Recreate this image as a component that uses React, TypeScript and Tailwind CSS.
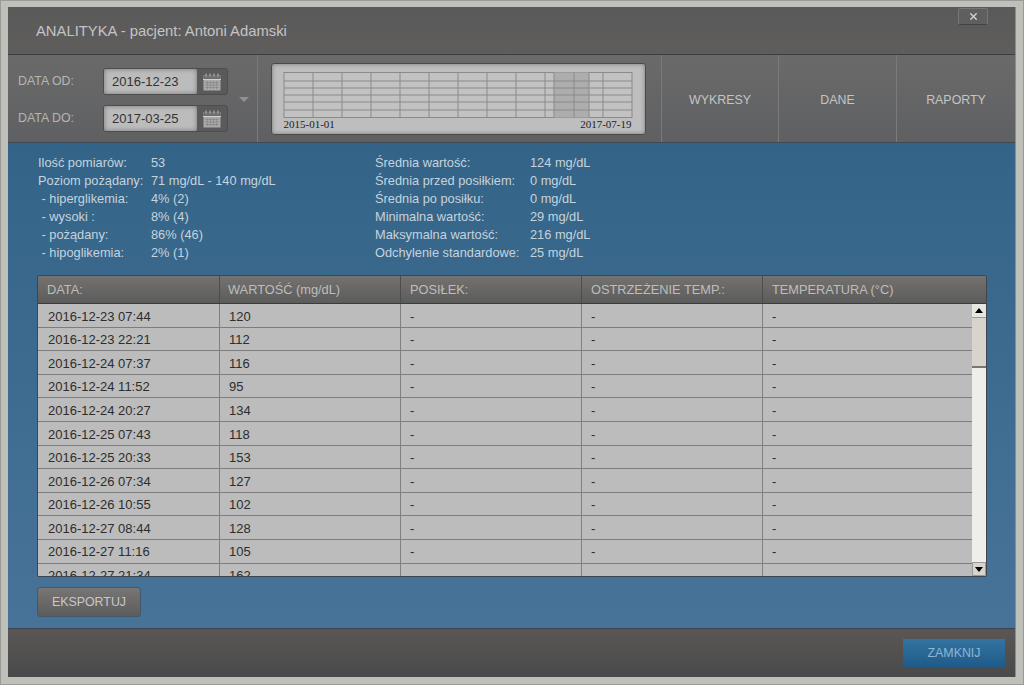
import { X } from 'lucide-react'

const font = { fontFamily: '"Liberation Sans", Arial, sans-serif' }

const rows = [
  ['2016-12-23 07:44', '120'],
  ['2016-12-23 22:21', '112'],
  ['2016-12-24 07:37', '116'],
  ['2016-12-24 11:52', '95'],
  ['2016-12-24 20:27', '134'],
  ['2016-12-25 07:43', '118'],
  ['2016-12-25 20:33', '153'],
  ['2016-12-26 07:34', '127'],
  ['2016-12-26 10:55', '102'],
  ['2016-12-27 08:44', '128'],
  ['2016-12-27 11:16', '105'],
  ['2016-12-27 21:34', '162'],
]

const statsLeft = [
  ['Ilość pomiarów:', '53'],
  ['Poziom pożądany:', '71 mg/dL - 140 mg/dL'],
  ['\u00a0- hiperglikemia:', '4% (2)'],
  ['\u00a0- wysoki :', '8% (4)'],
  ['\u00a0- pożądany:', '86% (46)'],
  ['\u00a0- hipoglikemia:', '2% (1)'],
]

const statsRight = [
  ['Średnia wartość:', '124 mg/dL'],
  ['Średnia przed posiłkiem:', '0 mg/dL'],
  ['Średnia po posiłku:', '0 mg/dL'],
  ['Minimalna wartość:', '29 mg/dL'],
  ['Maksymalna wartość:', '216 mg/dL'],
  ['Odchylenie standardowe:', '25 mg/dL'],
]

function CalendarIcon() {
  return (
    <svg width="18" height="18" viewBox="0 0 18 18">
      <rect x="0.5" y="2" width="17" height="15.5" fill="#a9a9a9" />
      <rect x="0.5" y="2" width="17" height="4" fill="#6f6f6f" />
      <path d="M0 6.5H18" stroke="#cfcfcf" strokeWidth="1" />
      <path d="M3 0.5V3.5M7 0.5V3.5M11 0.5V3.5M15 0.5V3.5" stroke="#bdbdbd" strokeWidth="1" />
      <path d="M2 9.5H16M2 12H16M2 14.5H16M4.5 8V16M7.5 8V16M10.5 8V16M13.5 8V16" stroke="#8a8a8a" strokeWidth="0.8" />
    </svg>
  )
}

function DateField({ label, value }: { label: string; value: string }) {
  return (
    <div className="flex items-center h-[27px]">
      <div className="w-[85px] text-[12.4px] text-[#b5b5b5]">{label}</div>
      <div className="flex h-[27px] w-[125px] rounded-[3px] border border-[#4d4d4d] bg-[#5a5a5a]">
        <div className="w-[93px] flex items-center pl-[8px] rounded-[2px] text-[13px] text-[#333] bg-[#bcbcbc] shadow-[inset_0_0_5px_#777]">
          {value}
        </div>
        <div className="flex-1 flex items-center justify-center">
          <CalendarIcon />
        </div>
      </div>
    </div>
  )
}

function MiniChart() {
  const vertical = [313, 342, 371, 400, 429, 458, 487, 516, 545, 554, 574, 589, 603]
  const horizontal = [81, 88, 95, 102, 110]
  return (
    <svg width="350" height="46" viewBox="283 72.5 350 46">
      <rect x="284" y="73" width="348" height="45" fill="#c2c2c2" stroke="#8a8a8a" />
      <rect x="554" y="73" width="35" height="45" fill="#adadad" />
      {vertical.map((x) => (
        <line key={x} x1={x} x2={x} y1="73" y2="118" stroke="#8a8a8a" />
      ))}
      {horizontal.map((y) => (
        <line key={y} x1="284" x2="632" y1={y + 0.5} y2={y + 0.5} stroke="#8a8a8a" />
      ))}
    </svg>
  )
}

function ToolButton({ label, width }: { label: string; width: string }) {
  return (
    <div className={`${width} flex items-center justify-center pt-[4px] border-l border-[#7a7a7a] text-[12.4px] text-[#c4c4c4]`}>
      {label}
    </div>
  )
}

function StatTable({ data, labelWidth }: { data: string[][]; labelWidth: string }) {
  return (
    <div>
      {data.map(([label, value]) => (
        <div key={label} className="flex h-[18px] items-center text-[12.8px] text-[#c6d3dd]">
          <div className={labelWidth}>{label}</div>
          <div>{value}</div>
        </div>
      ))}
    </div>
  )
}

export default function App() {
  return (
    <div style={font} className="w-[1024px] h-[685px] overflow-hidden bg-[#c0c0ba] border border-[#9a9a96] p-[7px] pt-[6px]">
      <div className="h-[670px] flex flex-col border-r border-[#8c8c88]">
        {/* title bar */}
        <div className="relative h-[48px] flex items-center pl-[28px] pt-[2px] border-b border-[#3d3d3d] bg-gradient-to-b from-[#5a5a5a] to-[#5f5d5c]">
          <div className="text-[14.8px] text-[#c4c4c4]">ANALITYKA - pacjent: Antoni Adamski</div>
          <div className="absolute right-[27px] top-[1px] w-[30px] h-[17px] flex items-center justify-center rounded-[2px] border border-[#777] border-b-[#444] bg-[#5f5f5f]">
            <X size={11} strokeWidth={3} className="text-[#d4d4d4]" />
          </div>
        </div>

        {/* toolbar */}
        <div className="h-[88px] flex bg-gradient-to-b from-[#6a6a6a] to-[#5f6062] border-b border-[#3f4a55]">
          <div className="w-[249px] relative flex flex-col justify-center gap-[10px] pl-[10px] pt-[3px]">
            <DateField label="DATA OD:" value="2016-12-23" />
            <DateField label="DATA DO:" value="2017-03-25" />
            <div className="absolute left-[231px] top-[42px] w-0 h-0 border-x-[5px] border-x-transparent border-t-[5px] border-t-[#909090]" />
          </div>
          <div className="flex-1 flex items-center pl-[13px] border-l border-[#7a7a7a]">
            <div className="w-[375px] h-[72px] rounded-[3px] border border-[#4a4a4a] bg-[#bebebe] shadow-[inset_0_0_4px_#777] flex flex-col pt-[8px] pr-[2px] items-center">
              <MiniChart />
              <div className="w-[350px] flex justify-between text-[11px] leading-[12px] text-[#222] px-[1px]" style={{ fontFamily: '"Liberation Serif", serif' }}>
                <span>2015-01-01</span>
                <span>2017-07-19</span>
              </div>
            </div>
          </div>
          <ToolButton label="WYKRESY" width="w-[117px]" />
          <ToolButton label="DANE" width="w-[118px]" />
          <ToolButton label="RAPORTY" width="w-[119px]" />
        </div>

        {/* body */}
        <div className="flex-1 bg-gradient-to-b from-[#336487] to-[#487399] px-[29px] pt-[11px]">
          <div className="flex h-[121px] pl-[1px]">
            <div className="w-[337px]">
              <StatTable data={statsLeft} labelWidth="w-[113px]" />
            </div>
            <StatTable data={statsRight} labelWidth="w-[155px]" />
          </div>

          <div className="w-[950px] h-[302px] flex flex-col rounded-[2px] border border-[#3b4650] overflow-hidden">
            <div className="h-[28px] shrink-0 flex bg-gradient-to-b from-[#747270] to-[#5c5c5c] border-b border-[#3c3c3c] text-[12.8px] text-[#bdbdbd]">
              <div className="w-[182px] flex items-center pl-[9px] border-r border-[#4c4c4c]">DATA:</div>
              <div className="w-[181px] flex items-center pl-[8px] border-r border-[#4c4c4c]">WARTOŚĆ (mg/dL)</div>
              <div className="w-[181px] flex items-center pl-[9px] border-r border-[#4c4c4c]">POSIŁEK:</div>
              <div className="w-[181px] flex items-center pl-[9px] border-r border-[#4c4c4c]">OSTRZEŻENIE TEMP.:</div>
              <div className="flex-1 flex items-center pl-[9px]">TEMPERATURA (°C)</div>
            </div>
            <div className="flex-1 flex min-h-0">
              <div className="w-[934px] overflow-hidden">
                {rows.map(([date, value]) => (
                  <div key={date} className="h-[23.6px] flex bg-[#bcbcbc] border-b border-[#7d7d7d] text-[13px] text-[#2d2d2d]">
                    <div className="w-[182px] pl-[10px] pt-[2px] flex items-center border-r border-[#808080]">{date}</div>
                    <div className="w-[181px] pl-[9px] pt-[2px] flex items-center border-r border-[#808080]">{value}</div>
                    <div className="w-[181px] pl-[9px] pt-[2px] flex items-center border-r border-[#808080]">-</div>
                    <div className="w-[181px] pl-[9px] pt-[2px] flex items-center border-r border-[#808080]">-</div>
                    <div className="flex-1 pl-[9px] pt-[2px] flex items-center">-</div>
                  </div>
                ))}
              </div>
              <div className="w-[14px] flex flex-col bg-[#f0eeea]">
                <div className="h-[14px] flex items-center justify-center bg-[#e8e6e1] border-b border-[#999]">
                  <div className="w-0 h-0 border-x-[4px] border-x-transparent border-b-[5px] border-b-black" />
                </div>
                <div className="h-[50px] bg-[#d8d3cb] border-b-2 border-[#777]" />
                <div className="flex-1" />
                <div className="h-[14px] flex items-center justify-center bg-[#d8d3cb] border border-[#999]">
                  <div className="w-0 h-0 border-x-[4px] border-x-transparent border-t-[5px] border-t-black" />
                </div>
              </div>
            </div>
          </div>

          <div className="mt-[10px] w-[104px] h-[30px] flex items-center justify-center rounded-[3px] border border-[#44586a] bg-gradient-to-b from-[#787674] to-[#5c5c5c] text-[12.4px] text-[#c8c8c8]">
            EKSPORTUJ
          </div>
        </div>

        {/* footer */}
        <div className="h-[49px] flex items-center justify-end pr-[10px] border-t border-[#37444f] bg-gradient-to-b from-[#5a5655] to-[#4a4a4a]">
          <div className="w-[102px] h-[28px] flex items-center justify-center bg-gradient-to-b from-[#33739f] to-[#1f5b8a] text-[12.4px] text-[#8fb6d2]">
            ZAMKNIJ
          </div>
        </div>
      </div>
    </div>
  )
}
